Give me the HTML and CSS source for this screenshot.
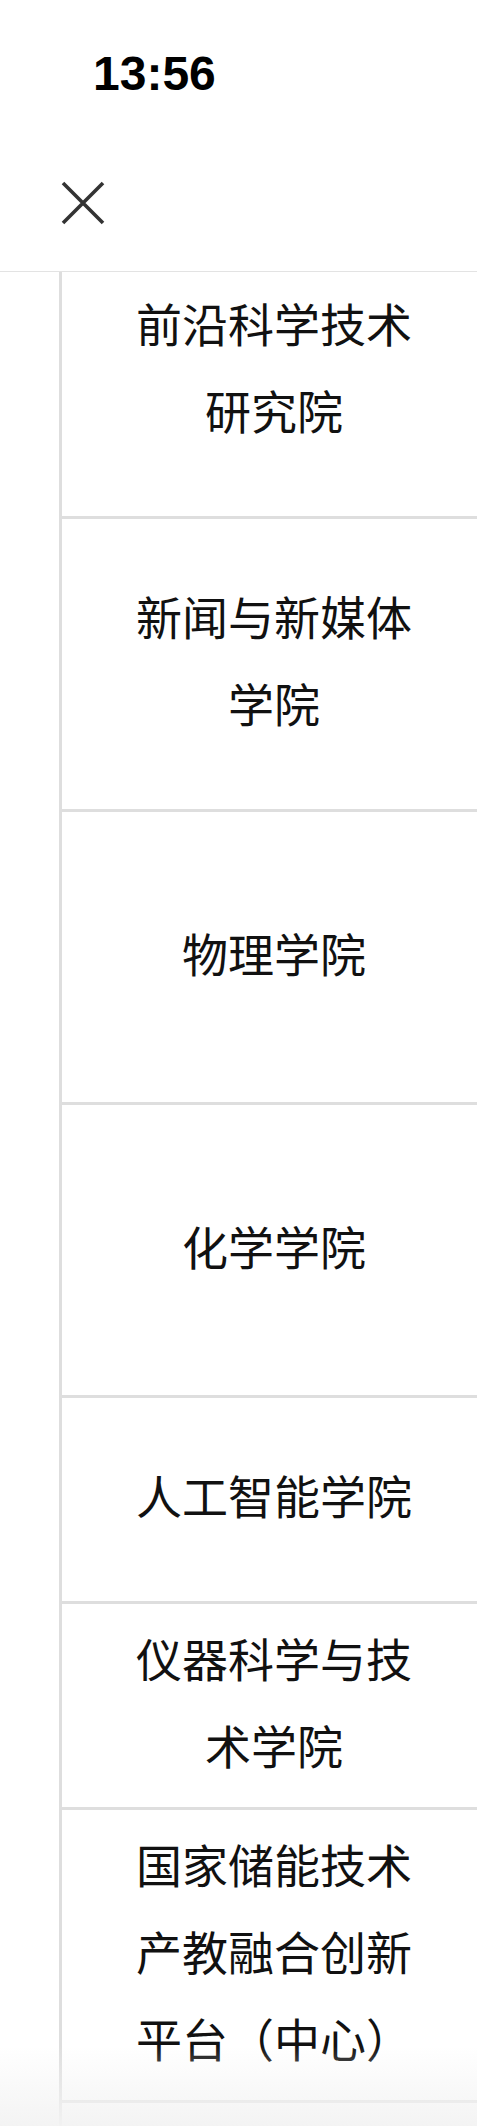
FILE: index.html
```html
<!DOCTYPE html>
<html lang="zh-CN">
<head>
<meta charset="utf-8">
<title>学院列表</title>
<link rel="stylesheet" href="styles.css">
</head>
<body>
<div class="page">
  <header class="header">
    <div class="status-time">13:56</div>
    <div class="nav">
      <svg class="close-icon" width="44" height="44" viewBox="0 0 44 44" aria-label="关闭">
        <path d="M2 2 L42 42 M42 2 L2 42" stroke="#333" stroke-width="3.6" fill="none"/>
      </svg>
    </div>
  </header>
  <div class="list-wrap">
    <ul class="list">
      <li class="item tall first"><span class="label">前沿科学技术研究院</span></li>
      <li class="item tall"><span class="label">新闻与新媒体学院</span></li>
      <li class="item tall"><span class="label">物理学院</span></li>
      <li class="item tall"><span class="label">化学学院</span></li>
      <li class="item short"><span class="label">人工智能学院</span></li>
      <li class="item short"><span class="label">仪器科学与技术学院</span></li>
      <li class="item tall"><span class="label">国家储能技术产教融合创新平台（中心）</span></li>
      <li class="item tall"><span class="label">&nbsp;</span></li>
    </ul>
  </div>
  <div class="bottom-fade"></div>
</div>
</body>
</html>
```

FILE: styles.css
```css
html, body {
  margin: 0;
  padding: 0;
  background: #fff;
}

body {
  height: 2126px;
  overflow: hidden;
  font-family: "Noto Sans CJK SC", "Noto Sans", sans-serif;
  color: #111;
}

.page {
  position: relative;
  height: 2126px;
  overflow: hidden;
}

.header {
  box-sizing: border-box;
  height: 272px;
  border-bottom: 1px solid #e3e3e3;
}

.status-time {
  padding: 50px 0 0 93px;
  font-family: "Liberation Sans", Arial, sans-serif;
  font-weight: bold;
  font-size: 48px;
  line-height: 48px;
  color: #000;
}

.nav {
  padding: 83px 0 0 61px;
  line-height: 0;
}

.close-icon {
  display: block;
}

.list-wrap {
  margin-left: 59px;
  border-left: 3px solid #dedede;
  height: 1860px;
  overflow: hidden;
}

.list {
  list-style: none;
  margin: 0;
  padding: 0;
}

.item {
  box-sizing: border-box;
  display: flex;
  align-items: center;
  justify-content: center;
  padding: 0 53px 10px 62px;
  border-bottom: 3px solid #dedede;
}

.item.first {
  margin-top: -46px;
}

.item.tall {
  height: 293px;
}

.item.short {
  height: 206px;
}

.label {
  display: block;
  width: 300px;
  text-align: center;
  font-size: 46px;
  line-height: 87px;
  color: #111;
}

.bottom-fade {
  position: absolute;
  left: 0;
  right: 0;
  bottom: 0;
  height: 80px;
  background: linear-gradient(to bottom, rgba(243,243,243,0), rgba(243,243,243,0.95));
  pointer-events: none;
}
```
